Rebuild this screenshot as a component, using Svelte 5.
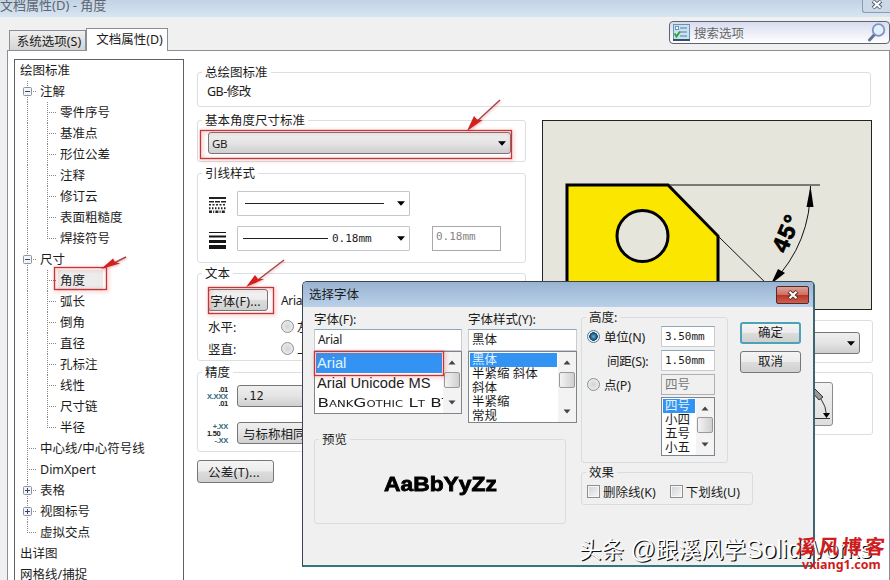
<script>
  const tree = [
    { text: '绘图标准', level: 0 },
    { text: '注解', level: 1, box: 'minus' },
    { text: '零件序号', level: 2 },
    { text: '基准点', level: 2 },
    { text: '形位公差', level: 2 },
    { text: '注释', level: 2 },
    { text: '修订云', level: 2 },
    { text: '表面粗糙度', level: 2 },
    { text: '焊接符号', level: 2, last: true },
    { text: '尺寸', level: 1, box: 'minus' },
    { text: '角度', level: 2, selected: true },
    { text: '弧长', level: 2 },
    { text: '倒角', level: 2 },
    { text: '直径', level: 2 },
    { text: '孔标注', level: 2 },
    { text: '线性', level: 2 },
    { text: '尺寸链', level: 2 },
    { text: '半径', level: 2, last: true },
    { text: '中心线/中心符号线', level: 1 },
    { text: 'DimXpert', level: 1 },
    { text: '表格', level: 1, box: 'plus' },
    { text: '视图标号', level: 1, box: 'plus' },
    { text: '虚拟交点', level: 1, last: true },
    { text: '出详图', level: 0 },
    { text: '网格线/捕捉', level: 0 }
  ];

  const fontStyles = ['黑体', '半紧缩 斜体', '斜体', '半紧缩', '常规'];
  const pointSizes = ['四号', '小四', '五号', '小五'];
</script>

{#snippet caret()}
  <svg class="caret" width="8" height="5" viewBox="0 0 8 5"><path d="M0 0.3H8L4 4.8Z" /></svg>
{/snippet}

{#snippet scrollbar()}
  <div class="scroll">
    <svg width="8" height="5" viewBox="0 0 8 5"><path d="M0.5 4.5L4 0.5L7.5 4.5Z" /></svg>
    <div class="thumb"></div>
    <svg class="down" width="8" height="5" viewBox="0 0 8 5"><path d="M0.5 0.5L4 4.5L7.5 0.5Z" /></svg>
  </div>
{/snippet}

<div class="window">
  <div class="titlebar">
    <span>文档属性(D) - 角度</span>
    <div class="close">
      <svg width="12" height="9" viewBox="0 0 12 9">
        <path d="M2 1L10 8M10 1L2 8" stroke="#596474" stroke-width="4" />
        <path d="M2.5 1.2L9.5 7.8M9.5 1.2L2.5 7.8" stroke="#fff" stroke-width="2" />
      </svg>
    </div>
  </div>

  <div class="toolbar">
    <div class="tab">系统选项(S)</div>
    <div class="tab active">文档属性(D)</div>
    <div class="search">
      <svg width="17" height="17" viewBox="0 0 17 17">
        <rect x="0.5" y="0.5" width="16" height="15" fill="#c9e2f3" stroke="#6c93b4" />
        <path d="M0 16H17" stroke="#34506b" stroke-width="2" />
        <path d="M7 4H14M7 8H14M7 12H14" stroke="#4e7da6" />
        <rect x="2.5" y="2.5" width="3" height="3" fill="#fff" stroke="#6c93b4" />
        <path d="M1.5 9.5L3.5 12.5L7 7.5" fill="none" stroke="#35a535" stroke-width="2" />
      </svg>
      <span>搜索选项</span>
      <svg width="18" height="19" viewBox="0 0 18 19">
        <path d="M7 11L1.5 17" stroke="#64748e" stroke-width="3" stroke-linecap="round" />
        <circle cx="10.5" cy="7" r="5.8" fill="#e3f0fb" stroke="#7a96c0" stroke-width="1.8" />
      </svg>
    </div>
  </div>

  <div class="page">
    <div class="tree">
      {#each tree as item}
        <div class="node">
          {#if item.level === 0}
            <span class="indent"></span>
          {:else}
            <svg width="25" height="21" viewBox="0 0 25 21">
              <path
                class="dots"
                d={item.level === 1 && item.last ? 'M12.5 0V11' : 'M12.5 0V21'}
              />
              {#if item.level === 1}
                <path class="dots" d="M14 10.5H22" />
              {/if}
              {#if item.box}
                <rect x="8.5" y="6.5" width="8" height="8" rx="1" fill="#f3f4f8" stroke="#8b92a0" />
                <path
                  d={item.box === 'plus' ? 'M10 10.5H15M12.5 8V13' : 'M10 10.5H15'}
                  stroke="#39436f"
                />
              {/if}
            </svg>
          {/if}
          {#if item.level === 2}
            <svg width="20" height="21" viewBox="0 0 20 21">
              <path class="dots" d={item.last ? 'M7.5 0V11' : 'M7.5 0V21'} />
              <path class="dots" d="M9 10.5H17" />
            </svg>
          {/if}
          <span class:selected={item.selected}>{item.text}</span>
        </div>
      {/each}
    </div>

    <div class="content">
      <div class="group overall">
        <div class="title">总绘图标准</div>
        <div class="standard">GB-修改</div>
      </div>

      <div class="columns">
        <div class="left">
          <div class="group base">
            <div class="title">基本角度尺寸标准</div>
            <div class="combo"><span>GB</span>{@render caret()}</div>
          </div>

          <div class="group leader">
            <div class="title">引线样式</div>
            <div class="line-row">
              <svg width="17" height="16" viewBox="0 0 17 16" stroke="#222">
                <path d="M0 1H17" stroke-width="2" />
                <path d="M0 4.7H17" stroke-width="1.5" stroke-dasharray="5 1" />
                <path d="M0 7.8H17" stroke-width="1.5" stroke-dasharray="2 1.5" />
                <path d="M0 11.2H17" stroke-width="2" stroke-dasharray="1.5 1.5" />
                <path d="M0 14.8H17" stroke-width="2.4" stroke-dasharray="3 1.2 1 1.2" />
              </svg>
              <div class="combo plain"><i class="stroke long"></i>{@render caret()}</div>
            </div>
            <div class="line-row second">
              <svg width="17" height="17" viewBox="0 0 17 17" fill="#151515">
                <path d="M0 0H17V1H0ZM0 3.5H17V5.5H0ZM0 8H17V11H0ZM0 13H17V17H0Z" />
              </svg>
              <div class="combo plain">
                <i class="stroke"></i><span class="mono">0.18mm</span>{@render caret()}
              </div>
              <div class="disabled mono">0.18mm</div>
            </div>
          </div>

          <div class="group text">
            <div class="title">文本</div>
            <div class="font-row">
              <button class="font-btn">字体(F)...</button>
              <span class="latin">Arial</span>
            </div>
            <div class="align-row"><span>水平:</span><i class="radio"></i><span>左</span></div>
            <div class="align-row"><span>竖直:</span><i class="radio"></i><span>上</span></div>
          </div>

          <div class="group precision">
            <div class="title">精度</div>
            <div class="prec-row">
              <div class="mini">
                <b class="end">.01</b><b class="blue">X.XXX</b><b class="end">.01</b>
              </div>
              <div class="combo"><span class="mono">.12</span></div>
            </div>
            <div class="prec-row tol">
              <div class="mini">
                <b class="blue end">+.XX</b><b>1.50</b><b class="blue end">-.XX</b>
              </div>
              <div class="combo"><span>与标称相同</span></div>
            </div>
          </div>

          <button class="tolerance">公差(T)...</button>
        </div>

        <div class="right">
          <div class="preview">
            <svg width="328" height="188" viewBox="543 121 328 188">
              <path
                d="M567 320V185H668L718 236V320Z"
                fill="#fbe600"
                stroke="#000"
                stroke-width="3"
              />
              <circle cx="642.5" cy="236" r="25.5" fill="#e5e5db" stroke="#000" stroke-width="3" />
              <path
                d="M668 185H820M718 236L775 292M810.5 186Q811 243 772 283"
                fill="none"
                stroke="#111"
              />
              <path d="M810.5 186L806.5 207H813.5ZM771 284L778 269L785 273Z" />
              <text x="0" y="0" transform="translate(786 254) rotate(-67)">45°</text>
            </svg>
          </div>
          <div class="group side-a">
            <div class="combo"><span></span>{@render caret()}</div>
          </div>
          <div class="group side-b">
            <div class="big-btn">
              <svg width="27" height="36" viewBox="0 0 27 36">
                <path d="M6 5L9 2L18 11L14 14Z" fill="#999" stroke="#333" />
                <path d="M16 13Q21 20 21.5 29M8 32.5H25" fill="none" stroke="#333" />
                <path d="M18 27H25L21.5 32Z" />
              </svg>
            </div>
          </div>
        </div>
      </div>
    </div>
  </div>
</div>

<div class="dialog">
  <div class="dialog-title">
    <span>选择字体</span>
    <div class="dialog-close">
      <svg width="12" height="10" viewBox="0 0 12 10">
        <path d="M2 1.5L10 8.5M10 1.5L2 8.5" stroke="#5b2a2a" stroke-width="4" />
        <path d="M2.5 1.8L9.5 8.2M9.5 1.8L2.5 8.2" stroke="#fff" stroke-width="2.2" />
      </svg>
    </div>
  </div>

  <div class="dialog-body">
    <div class="pickers">
      <div class="lists">
        <div class="picker">
          <div class="label">字体(F):</div>
          <div class="input latin">Arial</div>
          <div class="list fonts">
            <div class="items">
              <div class="picked">Arial</div>
              <div>Arial Unicode MS</div>
              <div class="gothic">BankGothic Lt BT</div>
            </div>
            {@render scrollbar()}
          </div>
        </div>
        <div class="picker styles">
          <div class="label">字体样式(Y):</div>
          <div class="input">黑体</div>
          <div class="list">
            <div class="items">
              {#each fontStyles as style, i}
                <div class:picked={i === 0}>{style}</div>
              {/each}
            </div>
            {@render scrollbar()}
          </div>
        </div>
      </div>
      <div class="group sample">
        <div class="title">预览</div>
        <div class="sample-text">AaBbYyZz</div>
      </div>
    </div>

    <div class="options">
      <div class="options-top">
        <div class="group height">
          <div class="title">高度:</div>
          <div class="size-row">
            <i class="radio on"></i><span>单位(N)</span>
            <div class="input mono">3.50mm</div>
          </div>
          <div class="size-row">
            <i class="radio none"></i><span class="spacing">间距(S):</span>
            <div class="input mono">1.50mm</div>
          </div>
          <div class="size-row">
            <i class="radio"></i><span>点(P)</span>
            <div class="input off">四号</div>
          </div>
          <div class="list points">
            <div class="items">
              {#each pointSizes as size, i}
                <div class:picked={i === 0}>{size}</div>
              {/each}
            </div>
            {@render scrollbar()}
          </div>
        </div>
        <div class="buttons">
          <button class="ok">确定</button>
          <button>取消</button>
        </div>
      </div>
      <div class="group effects">
        <div class="title">效果</div>
        <div class="checks">
          <i class="check"></i><span>删除线(K)</span>
          <i class="check"></i><span>下划线(U)</span>
        </div>
      </div>
    </div>
  </div>
</div>

<svg class="marks" width="890" height="580" viewBox="0 0 890 580">
  <g class="frames">
    <rect x="200.5" y="130.5" width="311" height="28" />
    <rect x="208.5" y="287.5" width="65" height="26" />
    <rect x="54.5" y="267.5" width="52" height="22" />
    <rect x="314.5" y="351.5" width="129" height="24" />
  </g>
  <g class="arrows">
    <path class="shaft" d="M500 100L474 124M284 260L254 283M126 257L112 264" />
    <path d="M467 131L474 116L477 119.5L482.5 120ZM246 287L255 275L258 279L264 279ZM101 269L113 258.5L115 262L120 263.5Z" />
  </g>
</svg>

<div class="watermark">头条 <em>@</em>跟溪风学<em>SolidWorks</em></div>
<div class="stamp">
  <span>溪风博客</span>
  <b>vxiang1.com</b>
</div>

<style>
  :global(body) {
    margin: 0;
    overflow: hidden;
    font-family: 'Noto Sans', 'Noto Sans CJK SC', sans-serif;
    font-size: 12.5px;
    color: #1c1c1c;
  }

  svg {
    display: block;
    flex: none;
  }

  i {
    flex: none;
    box-sizing: border-box;
  }

  button {
    font: inherit;
    color: inherit;
    padding: 0;
    border: 1px solid #777;
    border-radius: 3px;
    background: linear-gradient(#f4f4f4, #ececec 48%, #dcdcdc 52%, #d0d0d0);
    box-sizing: border-box;
    white-space: nowrap;
  }

  .mono {
    font-family: 'DejaVu Sans Mono', monospace;
    font-size: 11px;
  }

  .latin {
    font-size: 12px;
    letter-spacing: -0.3px;
  }

  .window {
    width: 890px;
    height: 580px;
    overflow: hidden;
    background: #f0f0f0;
    display: flex;
    flex-direction: column;
  }

  .titlebar {
    flex: none;
    height: 17px;
    background: linear-gradient(#c3d3e4, #d8e5f2);
    display: flex;
    justify-content: space-between;
    color: #5d6670;
    font-size: 13px;
    line-height: 11px;
  }

  .close {
    width: 28px;
    height: 13px;
    border: 1px solid #8b9bb0;
    border-top: 0;
    border-right: 0;
    border-radius: 0 0 0 3px;
    display: flex;
    justify-content: center;
    box-sizing: border-box;
    background: #cbd8e7;
  }

  .toolbar {
    flex: none;
    height: 33px;
    padding-left: 9px;
    display: flex;
    align-items: flex-end;
  }

  .tab {
    width: 77px;
    height: 20px;
    line-height: 21px;
    padding-left: 3px;
    text-align: center;
    border: 1px solid #8b8e94;
    border-bottom: 0;
    box-sizing: border-box;
    background: linear-gradient(#f0f0f0, #d4d4d4);
    white-space: nowrap;
  }

  .tab.active {
    width: 82px;
    height: 23px;
    margin-bottom: -1px;
    padding-left: 5px;
    background: #fff;
    z-index: 1;
  }

  .search {
    margin: 0 0 6px auto;
    width: 221px;
    height: 23px;
    border: 1px solid #5e6470;
    border-radius: 4px;
    background: linear-gradient(#d9dcef, #fff);
    display: flex;
    align-items: center;
    padding: 0 3px;
    gap: 4px;
    box-sizing: border-box;
    color: #666;
  }

  .search span {
    flex: 1;
  }

  .page {
    flex: 1;
    min-height: 0;
    margin-left: 7px;
    border: 1px solid #8b8e94;
    border-bottom: 0;
    background: #fff;
    display: flex;
  }

  .tree {
    flex: none;
    width: 170px;
    margin: 8px 0 0 6px;
    border: 1px solid #5e6268;
    border-bottom: 0;
    box-sizing: border-box;
  }

  .node {
    height: 21px;
    line-height: 21px;
    display: flex;
    white-space: nowrap;
  }

  .indent {
    width: 5px;
  }

  .dots {
    stroke: #888;
    stroke-dasharray: 1 1;
    fill: none;
  }

  .selected {
    background: #ececec;
    margin: 0 -2px;
    padding: 0 18px 0 2px;
  }

  .content {
    margin: 21px 0 0 13px;
    display: flex;
    flex-direction: column;
  }

  .group {
    border: 1px solid #dcdfe2;
    border-radius: 3px;
    box-sizing: border-box;
    display: flex;
    flex-direction: column;
    align-items: flex-start;
  }

  .title {
    height: 18px;
    line-height: 18px;
    margin: -9px 0 0 4px;
    padding: 0 3px;
    background: #fff;
  }

  .overall {
    width: 674px;
    height: 35px;
  }

  .standard {
    margin: 1px 0 0 9px;
    line-height: 18px;
    letter-spacing: -0.5px;
  }

  .columns {
    display: flex;
    margin-top: 13px;
  }

  .left {
    width: 328px;
    display: flex;
    flex-direction: column;
    align-items: flex-start;
  }

  .left .group {
    width: 329px;
  }

  .base {
    height: 42px;
  }

  .combo {
    height: 22px;
    border: 1px solid #777;
    border-radius: 3px;
    background: linear-gradient(#efefef, #e4e4e4 50%, #cfcfcf);
    box-sizing: border-box;
    display: flex;
    align-items: center;
    justify-content: space-between;
    padding: 0 4px;
    white-space: nowrap;
  }

  .base .combo {
    width: 303px;
    margin: 2px 0 0 10px;
    padding-left: 3px;
    font-size: 11.5px;
    letter-spacing: -0.4px;
  }

  .combo.plain {
    width: 173px;
    height: 25px;
    margin-left: 11px;
    border-color: #c4c6ca;
    border-radius: 1px;
    background: #fff;
    gap: 4px;
  }

  .plain .caret {
    margin-left: auto;
  }

  .stroke {
    height: 1px;
    width: 85px;
    margin-left: 1px;
    background: #222;
  }

  .stroke.long {
    width: 139px;
    margin-left: 3px;
  }

  .leader {
    height: 90px;
    margin-top: 11px;
  }

  .line-row {
    display: flex;
    align-items: center;
    height: 25px;
    margin: 8px 0 0 11px;
  }

  .line-row svg:first-child {
    margin-top: 3px;
  }

  .line-row.second {
    margin-top: 10px;
  }

  .disabled {
    width: 69px;
    height: 25px;
    line-height: 20px;
    margin-left: 22px;
    padding-left: 3px;
    border: 1px solid #a9a9a9;
    box-sizing: border-box;
    color: #858585;
  }

  .text {
    height: 88px;
    margin-top: 10px;
  }

  .font-row {
    display: flex;
    align-items: center;
    margin: 6px 0 0 10px;
    height: 22px;
  }

  .font-btn {
    width: 60px;
    height: 22px;
    margin-right: 13px;
    padding-right: 5px;
    letter-spacing: 0.2px;
  }

  .align-row {
    display: flex;
    align-items: center;
    height: 22px;
    margin-left: 10px;
  }

  .font-row + .align-row {
    margin-top: 4px;
  }

  .align-row span:first-child {
    width: 73px;
  }

  .align-row .radio {
    margin-right: 3px;
  }

  .radio {
    width: 13px;
    height: 13px;
    border: 1px solid #8d9094;
    border-radius: 50%;
    background: radial-gradient(#d2d4d6, #f2f2f2);
  }

  .radio.on {
    border-color: #5d7a90;
    background: radial-gradient(#56b4e6 0, #123f63 4px, #e8f2f8 4.5px);
  }

  .radio.none {
    visibility: hidden;
  }

  .precision {
    height: 80px;
    margin-top: 11px;
  }

  .prec-row {
    display: flex;
    align-items: center;
    height: 22px;
    margin: 3px 0 0 9px;
  }

  .prec-row.tol {
    margin-top: 15px;
  }

  .prec-row .combo {
    width: 160px;
    margin-left: 9px;
  }

  .prec-row .combo .mono {
    font-size: 12px;
  }

  .tol .combo {
    padding-left: 5px;
  }

  .mini {
    width: 21px;
    display: flex;
    flex-direction: column;
    font-family: 'Liberation Sans', sans-serif;
    font-size: 7.5px;
    line-height: 7px;
    letter-spacing: -0.3px;
  }

  .mini .blue {
    color: #2d6478;
  }

  .mini .end {
    align-self: flex-end;
  }

  .tolerance {
    width: 77px;
    height: 23px;
    margin-top: 8px;
    padding-right: 3px;
    letter-spacing: 0.3px;
  }

  .right {
    width: 331px;
    margin-left: 17px;
  }

  .preview {
    width: 328px;
    border: 1px solid #222;
    background: #e5e5db;
  }

  .preview text {
    font: bold 23px 'Liberation Sans', sans-serif;
    letter-spacing: 1.5px;
    stroke: #000;
    stroke-width: 0.8;
  }

  .side-a {
    height: 43px;
    margin-top: 10px;
    align-items: flex-end;
  }

  .side-a .combo {
    width: 120px;
    margin: 11px 12px 0 0;
    padding-right: 4px;
  }

  .side-b {
    height: 63px;
    margin-top: 9px;
    align-items: flex-end;
  }

  .big-btn {
    width: 44px;
    height: 44px;
    margin: 9px 39px 0 0;
    border: 1px solid #8c8c8c;
    border-radius: 3px;
    box-sizing: border-box;
    background: linear-gradient(#f2f2f2, #dedede);
    padding: 3px 0 0 15px;
  }

  .dialog {
    position: absolute;
    left: 302px;
    top: 281px;
    width: 513px;
    height: 286px;
    box-sizing: border-box;
    border: 1px solid #3b444e;
    border-right: 2px solid #3e6672;
    border-bottom: 2px solid #2f7882;
    border-radius: 5px 5px 0 0;
    background: #f0f0f0;
    overflow: hidden;
  }

  .dialog-title {
    height: 25px;
    line-height: 26px;
    padding: 0 4px 0 6px;
    background: linear-gradient(#98b3d2, #bad0e8);
    display: flex;
    justify-content: space-between;
  }

  .dialog-close {
    width: 33px;
    height: 18px;
    margin-top: 4px;
    border: 1px solid #57282b;
    border-radius: 2px;
    box-sizing: border-box;
    background: linear-gradient(#dda198, #cd6e61 48%, #bc3522 52%, #cb6250);
    display: flex;
    align-items: center;
    justify-content: center;
  }

  .dialog-body {
    display: flex;
    padding-left: 11px;
  }

  .dialog .title {
    background: #f0f0f0;
  }

  .dialog .group {
    border-color: #dadcde;
  }

  .pickers {
    width: 267px;
  }

  .lists {
    display: flex;
    gap: 6px;
    height: 117px;
  }

  .picker {
    width: 148px;
    white-space: nowrap;
  }

  .picker.styles {
    width: 109px;
  }

  .label {
    height: 22px;
    line-height: 26px;
  }

  .input {
    height: 22px;
    line-height: 20px;
    padding-left: 3px;
    border: 1px solid #c9ccd0;
    border-top-color: #8fa9b8;
    box-sizing: border-box;
    background: #fff;
  }

  .list {
    height: 72px;
    border: 1px solid #7f858c;
    box-sizing: border-box;
    background: #fff;
    display: flex;
    line-height: 14px;
  }

  .list.fonts {
    height: 63px;
    line-height: 20px;
    font-family: 'Liberation Sans', Arial, sans-serif;
    font-size: 14.7px;
  }

  .items {
    flex: 1;
    overflow: hidden;
    padding: 1px 1px 0;
    white-space: nowrap;
  }

  .items > div {
    padding-left: 2px;
  }

  .fonts .items > div {
    padding-left: 1px;
  }

  .items .picked {
    background: #3393f3;
    color: #e4f4ff;
  }

  .items .gothic {
    width: 140px;
    font-family: 'DejaVu Sans', sans-serif;
    font-variant: small-caps;
    font-size: 11.5px;
    transform: scaleX(1.46);
    transform-origin: left;
  }

  .scroll {
    width: 18px;
    background: #f3f3f3;
    display: flex;
    flex-direction: column;
    align-items: center;
    padding: 8px 1px 8px 0;
    box-sizing: border-box;
  }

  .scroll svg {
    fill: #444;
  }

  .scroll .down {
    margin-top: auto;
  }

  .thumb {
    width: 14px;
    height: 14px;
    margin-top: 7px;
    border: 1px solid #999;
    border-radius: 2px;
    background: linear-gradient(90deg, #f4f4f4, #cfcfcf);
  }

  .sample {
    width: 252px;
    height: 85px;
    margin-top: 15px;
  }

  .sample-text {
    align-self: center;
    margin-top: 24px;
    font: bold 20px 'Liberation Sans', sans-serif;
    -webkit-text-stroke: 0.8px #000;
    color: #000;
    transform: scaleX(1.14);
  }

  .options-top {
    display: flex;
  }

  .height {
    width: 147px;
    height: 146px;
    margin-top: 10px;
  }

  .height .title {
    margin-bottom: -1px;
  }

  .size-row {
    display: flex;
    align-items: center;
    width: 100%;
    height: 20px;
    margin-bottom: 4px;
    padding-left: 5px;
    box-sizing: border-box;
    white-space: nowrap;
    letter-spacing: -0.2px;
  }

  .size-row .radio {
    margin-right: 4px;
  }

  .size-row .spacing {
    margin-left: 3px;
  }

  .size-row .input {
    width: 54px;
    height: 21px;
    line-height: 19px;
    margin: 0 12px 0 auto;
    letter-spacing: 0;
  }

  .size-row .off {
    background: #f0f0f0;
    color: #777;
    border-color: #b0b0b0;
  }

  .list.points {
    width: 54px;
    height: 59px;
    margin: -1px 0 0 79px;
  }

  .points .thumb {
    margin-top: 6px;
  }

  .buttons {
    display: flex;
    flex-direction: column;
    gap: 7px;
    margin: 15px 0 0 12px;
  }

  .buttons button {
    width: 61px;
    height: 22px;
    line-height: 18px;
  }

  .buttons .ok {
    border: 2px solid #4ba3b5;
  }

  .effects {
    width: 172px;
    height: 33px;
    margin-top: 9px;
  }

  .checks {
    display: flex;
    align-items: center;
    margin-left: 5px;
    white-space: nowrap;
  }

  .check {
    width: 13px;
    height: 13px;
    margin-right: 3px;
    border: 1px solid #8e8f8f;
    background: linear-gradient(135deg, #cfd2d5, #f7f7f7);
    outline: 1px solid #f8f8f8;
    outline-offset: -2px;
  }

  .checks span + .check {
    margin-left: 14px;
  }

  .marks {
    position: absolute;
    left: 0;
    top: 0;
    pointer-events: none;
  }

  .frames {
    fill: none;
    stroke: #c0373b;
    stroke-width: 1.3;
    filter: drop-shadow(1px 1px 2px rgba(230, 60, 60, 0.6));
  }

  .arrows {
    fill: #d3201f;
    filter: drop-shadow(1px 1px 1px rgba(200, 60, 60, 0.35));
  }

  .shaft {
    stroke: #a8484a;
    stroke-width: 1.5;
    fill: none;
  }

  .watermark {
    position: absolute;
    left: 579px;
    top: 535px;
    font-family: 'Liberation Sans', 'Noto Sans CJK SC', sans-serif;
    font-size: 22.5px;
    line-height: 32px;
    white-space: nowrap;
    color: #fff;
    text-shadow: 1.3px 1.3px 0 #111;
  }

  .watermark em {
    font-style: normal;
    font-size: 25px;
    line-height: 1;
  }

  .stamp {
    position: absolute;
    left: 796px;
    top: 534px;
    color: #d01c1c;
    white-space: nowrap;
  }

  .stamp span {
    display: block;
    font: 700 20px / 24px 'Noto Sans CJK SC', serif;
    letter-spacing: 3px;
    transform: skewX(-5deg);
  }

  .stamp b {
    display: block;
    margin-left: 6px;
    font-size: 12.5px;
    line-height: 14px;
  }
</style>
